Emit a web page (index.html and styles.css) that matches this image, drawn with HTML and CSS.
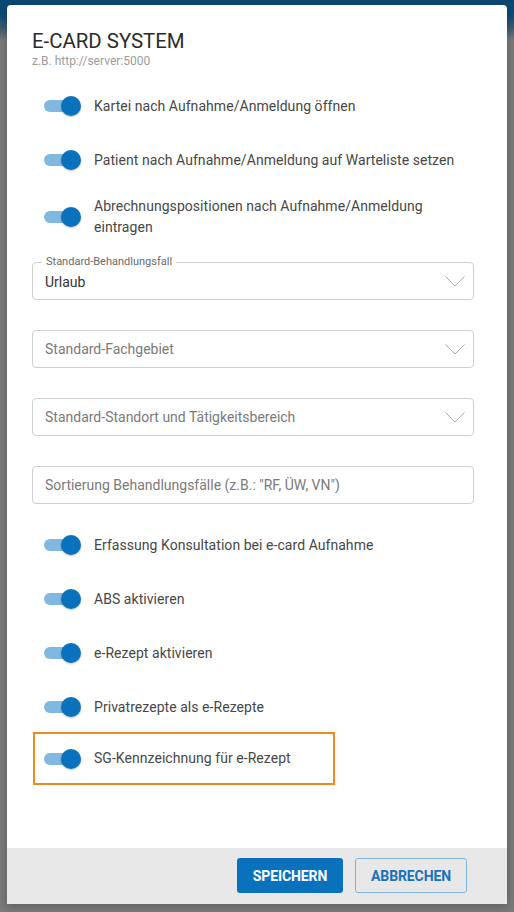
FILE: index.html
```html
<!DOCTYPE html>
<html lang="de">
<head>
<meta charset="utf-8">
<title>E-Card System</title>
<link rel="stylesheet" href="styles.css">
</head>
<body>
<div class="dialog">
  <div class="dialog-body">
    <h1 class="title">E-CARD SYSTEM</h1>
    <div class="subtitle">z.B. http://server:5000</div>

    <div class="toggle-list">
      <div class="toggle-row">
        <span class="toggle"><span class="track"></span><span class="thumb"></span></span>
        <span class="toggle-label">Kartei nach Aufnahme/Anmeldung öffnen</span>
      </div>
      <div class="toggle-row">
        <span class="toggle"><span class="track"></span><span class="thumb"></span></span>
        <span class="toggle-label">Patient nach Aufnahme/Anmeldung auf Warteliste setzen</span>
      </div>
      <div class="toggle-row">
        <span class="toggle"><span class="track"></span><span class="thumb"></span></span>
        <span class="toggle-label">Abrechnungspositionen nach Aufnahme/Anmeldung eintragen</span>
      </div>
    </div>

    <div class="fields">
      <div class="field select">
        <span class="field-label">Standard-Behandlungsfall</span>
        <span class="value">Urlaub</span>
        <svg class="chevron" width="20" height="11" viewBox="0 0 20 11"><path d="M0.5 0.5 L10 10 L19.5 0.5" fill="none" stroke="#ababab" stroke-width="1"/></svg>
      </div>
      <div class="field select">
        <span class="placeholder">Standard-Fachgebiet</span>
        <svg class="chevron" width="20" height="11" viewBox="0 0 20 11"><path d="M0.5 0.5 L10 10 L19.5 0.5" fill="none" stroke="#ababab" stroke-width="1"/></svg>
      </div>
      <div class="field select">
        <span class="placeholder">Standard-Standort und Tätigkeitsbereich</span>
        <svg class="chevron" width="20" height="11" viewBox="0 0 20 11"><path d="M0.5 0.5 L10 10 L19.5 0.5" fill="none" stroke="#ababab" stroke-width="1"/></svg>
      </div>
      <div class="field">
        <span class="placeholder">Sortierung Behandlungsfälle (z.B.: "RF, ÜW, VN")</span>
      </div>
    </div>

    <div class="toggle-list lower">
      <div class="toggle-row">
        <span class="toggle"><span class="track"></span><span class="thumb"></span></span>
        <span class="toggle-label">Erfassung Konsultation bei e-card Aufnahme</span>
      </div>
      <div class="toggle-row">
        <span class="toggle"><span class="track"></span><span class="thumb"></span></span>
        <span class="toggle-label">ABS aktivieren</span>
      </div>
      <div class="toggle-row">
        <span class="toggle"><span class="track"></span><span class="thumb"></span></span>
        <span class="toggle-label">e-Rezept aktivieren</span>
      </div>
      <div class="toggle-row">
        <span class="toggle"><span class="track"></span><span class="thumb"></span></span>
        <span class="toggle-label">Privatrezepte als e-Rezepte</span>
      </div>
      <div class="highlight">
        <div class="toggle-row inner">
          <span class="toggle"><span class="track"></span><span class="thumb"></span></span>
          <span class="toggle-label">SG-Kennzeichnung für e-Rezept</span>
        </div>
      </div>
    </div>
  </div>
  <div class="dialog-footer">
    <button class="btn btn-primary">SPEICHERN</button>
    <button class="btn btn-outline">ABBRECHEN</button>
  </div>
</div>
</body>
</html>
```

FILE: styles.css
```css
* { box-sizing: border-box; }

html, body {
  margin: 0;
  padding: 0;
  height: 100%;
}

body {
  font-family: Roboto, "Noto Sans", "Liberation Sans", sans-serif;
  background: linear-gradient(to bottom, #0c4773 0px, #0d4a76 14px, #3e5a70 28px, #7a7a7a 40px, #7a7a7a 100%);
  padding: 5px 7px 0 7px;
  overflow: hidden;
}

.dialog {
  width: 500px;
  height: 899px;
  background: #ffffff;
  border-radius: 4px 4px 0 0;
  display: flex;
  flex-direction: column;
  box-shadow: 0 2px 10px rgba(0,0,0,0.25);
}

.dialog-body {
  flex: 1;
  padding: 24px 33px 0 25px;
}

.title {
  margin: 0;
  font-size: 20.4px;
  line-height: 24px;
  font-weight: 400;
  color: #2b2b2b;
}

.subtitle {
  margin-top: 1px;
  font-size: 12px;
  line-height: 15px;
  color: #9c9c9c;
}

.toggle-list {
  margin-top: 10px;
  display: flex;
  flex-direction: column;
}

.toggle-list.lower {
  margin-top: 14px;
}

.toggle-row {
  display: flex;
  align-items: center;
  min-height: 54px;
  padding: 9px 0 9px 12px;
  gap: 13px;
}

.toggle {
  position: relative;
  flex: none;
  width: 37px;
  height: 20px;
}

.track {
  position: absolute;
  left: 0;
  top: 4px;
  width: 32px;
  height: 12px;
  border-radius: 6px;
  background: #80b8e0;
}

.thumb {
  position: absolute;
  left: 17px;
  top: 0;
  width: 20px;
  height: 20px;
  border-radius: 50%;
  background: #0a72bd;
  box-shadow: 0 1px 2px rgba(0,0,0,0.25);
}

.toggle-label {
  font-size: 14px;
  line-height: 21px;
  color: #474747;
  letter-spacing: 0.05px;
}

.fields {
  margin-top: 15px;
  display: flex;
  flex-direction: column;
  gap: 30px;
}

.field {
  position: relative;
  height: 38px;
  border: 1px solid #cfcfcf;
  border-radius: 4px;
  display: flex;
  align-items: center;
  padding: 0 8px 0 12px;
  font-size: 14px;
}

.field-label {
  position: absolute;
  left: 9px;
  top: -8px;
  padding: 0 4px;
  background: #ffffff;
  font-size: 11px;
  line-height: 13px;
  color: #6a6a6a;
}

.value {
  flex: 1;
  color: #333333;
  padding-top: 2px;
}

.placeholder {
  flex: 1;
  color: #7a7a7a;
}

.chevron {
  flex: none;
  display: block;
}

.highlight {
  margin-top: -2px;
  margin-left: 1px;
  width: 302px;
  height: 53px;
  border: 2px solid #ef8a1e;
  display: flex;
  align-items: center;
}

.toggle-row.inner {
  min-height: 0;
  padding: 0 0 0 9px;
}

.dialog-footer {
  flex: none;
  height: 56px;
  background: #e8e8e8;
  display: flex;
  justify-content: flex-end;
  align-items: flex-start;
  gap: 12px;
  padding: 10px 40px 0 0;
}

.btn {
  height: 35px;
  border-radius: 3px;
  font-family: Roboto, "Liberation Sans", sans-serif;
  font-size: 14px;
  font-weight: 700;
  letter-spacing: -0.1px;
  cursor: pointer;
  padding: 0;
}

.btn-primary {
  width: 106px;
  background: #0a72bd;
  color: #ffffff;
  border: none;
}

.btn-outline {
  width: 112px;
  background: transparent;
  color: #1a72b8;
  border: 1px solid #7db5de;
}
```
